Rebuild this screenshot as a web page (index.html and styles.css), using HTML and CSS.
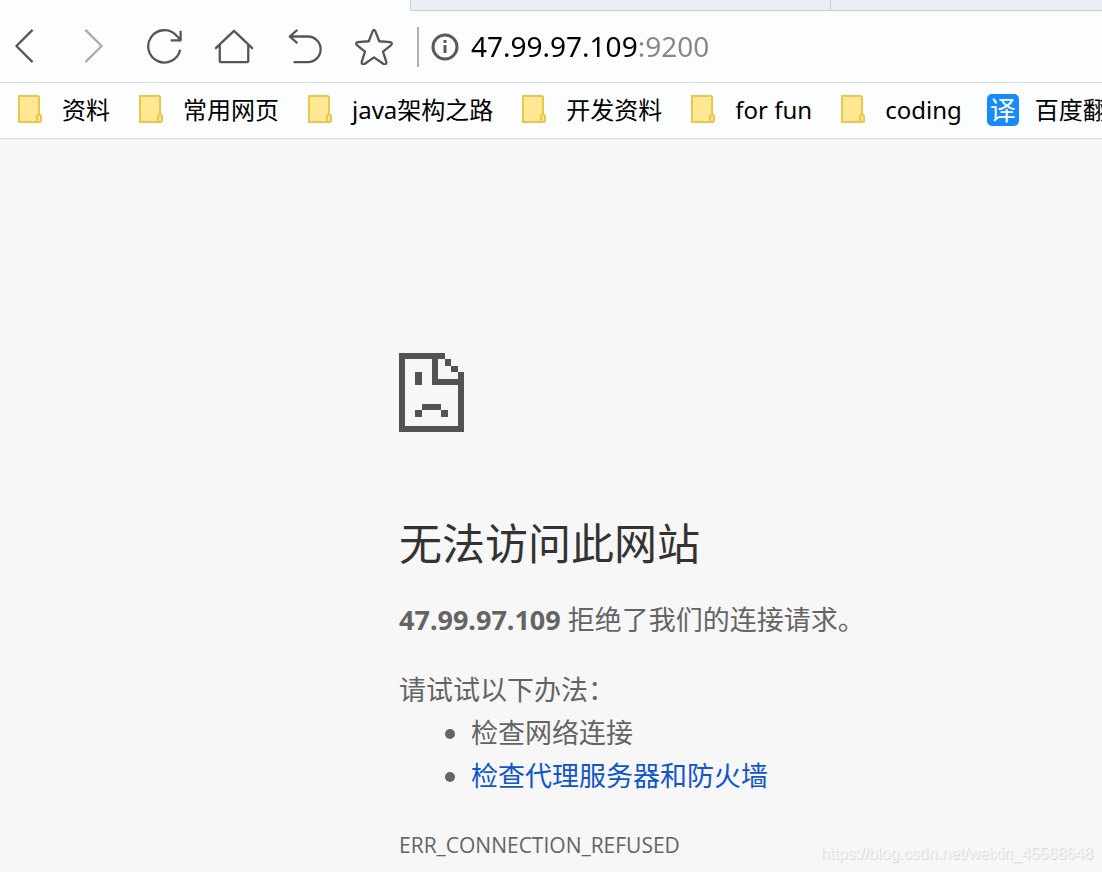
FILE: index.html
```html
<!DOCTYPE html>
<html lang="zh-CN">
<head>
<meta charset="utf-8">
<meta name="viewport" content="width=device-width, initial-scale=1">
<title>47.99.97.109</title>
<link rel="stylesheet" href="styles.css">
</head>
<body>
<svg class="defs" aria-hidden="true">
  <symbol id="folder" viewBox="0 1 32 32">
    <path d="M5 3H24L25 4V21H27V29H5Z" fill="#ffe794"/>
    <path d="M5 3H24L25 4V21" fill="none" stroke="#ebc64b" stroke-width="2"/>
    <path d="M5 2V29H26L27 28V23L25 21L23 23V29" fill="none" stroke="#ebc64b" stroke-width="2"/>
  </symbol>
</svg>

<div class="tabs">
  <div class="tab active"></div>
  <div class="tab"></div>
  <div class="tab last"></div>
</div>

<header class="toolbar">
  <nav class="actions" aria-label="导航">
    <button class="tool" type="button" aria-label="后退"><svg viewBox="0 0 40 40"><path d="M29 3L12 20L29 37"/></svg></button>
    <button class="tool muted" type="button" aria-label="前进"><svg viewBox="0 0 40 40"><path d="M11 3L28 20L11 37"/></svg></button>
    <button class="tool" type="button" aria-label="刷新"><svg viewBox="0 0 40 40"><path d="M37 24A17 17 0 1 1 33 9L37 13M37.500 4V14H27"/></svg></button>
    <button class="tool" type="button" aria-label="主页"><svg viewBox="0 0 40 40"><path d="M0 23L20 4L40 23M5 19V36Q5 37 6 37H34Q35 37 35 36V19"/></svg></button>
    <button class="tool" type="button" aria-label="撤销"><svg viewBox="0 0 40 40"><path d="M13 3L5 10L13 17M5 10H24A13 13 0 0 1 24 37H9"/></svg></button>
    <button class="tool" type="button" aria-label="收藏"><svg viewBox="0 0 40 40"><path d="M20 3Q21 3 22 6L25.500 15L37 16Q40 17 38 19L29.500 26L33 37Q33 40 30 39L20 32L10 39Q7 40 7 37L10.500 26L2 19Q0 17 3 16L14.500 15L18 6Q19 3 20 3Z"/></svg></button>
  </nav>
  <div class="address">
    <svg class="info" viewBox="0 0 28 28" aria-hidden="true"><circle cx="14" cy="14" r="12" fill="none" stroke="#5a5a5a" stroke-width="3"/><path d="M12.500 7H15.500V10H12.500ZM12.500 12H15.500V20H12.500Z" fill="#5a5a5a"/></svg>
    <input class="url" type="text" aria-label="地址" value="47.99.97.109:9200" spellcheck="false">
  </div>
</header>

<nav class="bookmarks" aria-label="书签">
  <a class="bookmark" href="#"><svg class="icon"><use href="#folder"/></svg>资料</a>
  <a class="bookmark" href="#"><svg class="icon"><use href="#folder"/></svg>常用网页</a>
  <a class="bookmark" href="#"><svg class="icon"><use href="#folder"/></svg>java架构之路</a>
  <a class="bookmark" href="#"><svg class="icon"><use href="#folder"/></svg>开发资料</a>
  <a class="bookmark" href="#"><svg class="icon"><use href="#folder"/></svg>for fun</a>
  <a class="bookmark" href="#"><svg class="icon"><use href="#folder"/></svg>coding</a>
  <a class="bookmark" href="#"><span class="icon translate">译</span>百度翻</a>
</nav>

<main class="error">
  <svg class="sad" viewBox="0 0 65 79" aria-hidden="true"><path fill="#535353" fill-rule="evenodd" d="M0 0H46V6H39V26H59V19H65V79H0ZM6 6V73H59V32H33V6ZM46 6H52V13H46ZM52 13H59V19H52ZM16 19H23V32H16ZM23 51H42V57H23ZM16 57H23V64H16ZM42 57H49V64H42Z"/></svg>
  <h1>无法访问此网站</h1>
  <p class="summary"><strong>47.99.97.109</strong> 拒绝了我们的连接请求。</p>
  <p class="hint">请试试以下办法：</p>
  <ul class="tips">
    <li>检查网络连接</li>
    <li><a href="#">检查代理服务器和防火墙</a></li>
  </ul>
  <p class="code">ERR_CONNECTION_REFUSED</p>
</main>
<div class="watermark">https://blog.csdn.net/weixin_45568648</div>
</body>
</html>
```
FILE: styles.css
```css
* { box-sizing: border-box; }

body {
  margin: 0;
  min-height: 100vh;
  position: relative;
  display: flex;
  flex-direction: column;
  overflow-x: hidden;
  background: #f7f7f7;
  color: #646464;
  font-family: "Noto Sans", "Noto Sans CJK SC", sans-serif;
}

.defs { position: absolute; width: 0; height: 0; }

.tabs { display: flex; height: 11px; background: #ebedf5; }
.tab { width: 420px; border-bottom: 1px solid #c9cbd0; border-right: 1px solid #c9cbd0; }
.tab.active { width: 411px; background: #fcfdff; border-bottom-color: #fcfdff; }
.tab.last { flex: 1; border-right: 0; }

.toolbar {
  display: flex;
  align-items: center;
  height: 72px;
  background: #fcfdff;
  border-bottom: 1px solid #d9dbde;
}
.actions { display: flex; gap: 30px; padding: 0 23px 2px 4px; }
.tool { display: flex; width: 40px; padding: 0; border: 0; background: none; color: #555; }
.tool.muted { color: #aaa; }
.tool svg {
  width: 40px;
  height: 40px;
  padding: 1px;
  fill: none;
  stroke: currentColor;
  stroke-width: 2.4;
  stroke-linejoin: round;
}
.address {
  flex: 1;
  display: flex;
  align-items: center;
  gap: 12px;
  height: 40px;
  padding-left: 12px;
  border-left: 2px solid #b0b1b3;
}
.info { width: 28px; height: 28px; }
.url {
  flex: 1;
  min-width: 0;
  height: 40px;
  padding: 0 0 2px;
  border: 0;
  outline: 0;
  font: 28px/38px "Noto Sans", sans-serif;
  color: transparent;
  caret-color: #000;
  background: linear-gradient(to right, #000 168px, #868686 168px);
  -webkit-background-clip: text;
  background-clip: text;
}

.bookmarks {
  display: flex;
  align-items: center;
  gap: 25px;
  height: 56px;
  padding: 0 0 2px 14px;
  overflow: hidden;
  background: #fcfdff;
  border-bottom: 1px solid #d9dbde;
}
.bookmark {
  flex: none;
  display: flex;
  align-items: center;
  gap: 16px;
  color: #000;
  font-size: 24px;
  line-height: 32px;
  text-decoration: none;
}
.icon { width: 32px; height: 32px; }
.translate {
  border-radius: 5px;
  background: #168bf9;
  color: #fff;
  font-size: 26px;
  text-align: center;
}

.error { margin-left: 399px; padding: 214px 24px 0 0; font-size: 27px; line-height: 43px; }
.sad { display: block; width: 65px; height: 79px; }
h1 { margin: 85px 0 27px; color: #333; font-size: 43px; line-height: 54px; font-weight: 400; }
p { margin: 0; }
.summary { margin-bottom: 27px; }
.tips { margin: 0; padding-left: 72px; }
.tips a { color: #1155cc; text-decoration: none; }
.code { margin-top: 31px; font-family: "Open Sans", sans-serif; font-size: 21px; line-height: 34px; }

.watermark {
  position: absolute;
  right: 9px;
  bottom: 8px;
  color: #f7f7f7;
  font: 16px/20px "Liberation Sans", sans-serif;
  text-shadow: 1px 1px 1px #d2d2d2;
}
```
